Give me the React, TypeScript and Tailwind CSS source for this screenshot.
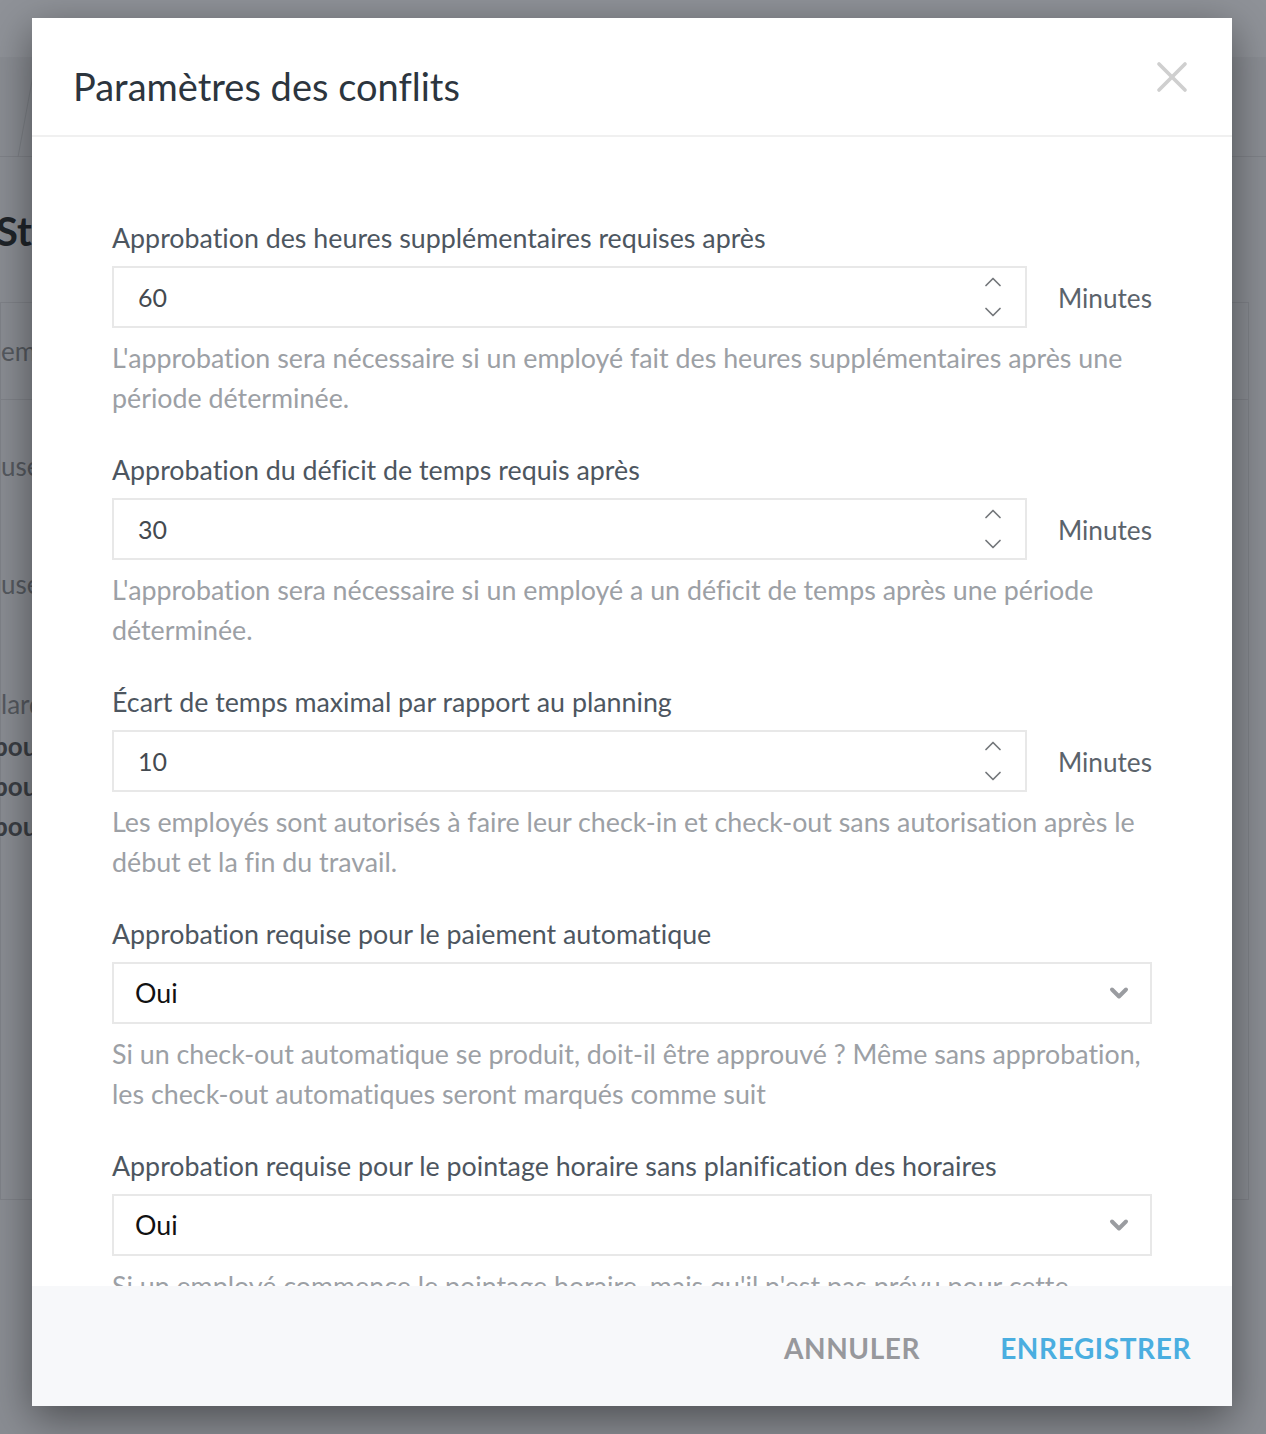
import { ChevronDown, ChevronUp, X } from "lucide-react";

const font = { fontFamily: "Lato, 'Noto Sans', sans-serif", fontVariantLigatures: "none" as const };

const NumberField = ({ label, value, help }: { label: string; value: string; help: string }) => (
  <div className="mb-[32px]">
    <div className="text-[26.8px] leading-[40px] text-[#4d5660]">{label}</div>
    <div className="mt-2 flex items-center">
      <div className="flex h-[62px] w-[915px] shrink-0 items-center justify-between border-2 border-[#e8e8e8] pl-[24px] pr-[18px]">
        <span className="pt-[2px] text-[25px] text-[#444a50]">{value}</span>
        <div className="flex flex-col items-center text-[#74777b]">
          <ChevronUp size={28} strokeWidth={1.5} />
          <ChevronDown size={28} strokeWidth={1.5} className="mt-[2px]" />
        </div>
      </div>
      <span className="ml-auto pt-[4px] text-[26.2px] text-[#5b636b]">Minutes</span>
    </div>
    <p className="mt-[10px] text-[26.8px] leading-[40px] text-[#9ca0a5]">{help}</p>
  </div>
);

const SelectField = ({ label, help }: { label: string; help: string }) => (
  <div className="mb-[32px]">
    <div className="text-[26.8px] leading-[40px] text-[#4d5660]">{label}</div>
    <div className="mt-2 flex h-[62px] w-full items-center justify-between border-2 border-[#e8e8e8] pl-[21px] pr-[17px]">
      <span className="text-[26.8px] text-[#111]">Oui</span>
      <ChevronDown size={28} strokeWidth={3.4} className="text-[#9a9ca0]" />
    </div>
    <p className="mt-[10px] text-[26.8px] leading-[40px] text-[#9ca0a5]">{help}</p>
  </div>
);

export default function App() {
  return (
    <div className="relative h-[1434px] w-full overflow-hidden bg-[#8a8d93]" style={font}>
      {/* page behind the overlay */}
      <div className="h-[57px] bg-[#8f9298]" />
      <div className="relative h-[100px] border-b border-[#7f8288]">
        <svg className="absolute left-[14px] top-[2px]" width="24" height="98" viewBox="0 0 24 98">
          <line x1="22" y1="0" x2="4" y2="98" stroke="#7d8086" strokeWidth="1" />
        </svg>
      </div>
      <div className="-ml-[4px] pt-[48px] text-[40px] font-bold leading-[52px] text-[#1f2429]">Statistiques</div>
      <div className="mr-[17px] mt-[45px] h-[898px] border border-[#7f8288]">
        <div className="flex h-[97px] items-center border-b border-[#7f8288] text-[26px] text-[#55595f]">employés</div>
        <div className="pt-[48px] text-[26px] leading-[36px] text-[#55595f]">usé</div>
        <div className="pt-[82px] text-[26px] leading-[36px] text-[#55595f]">usé</div>
        <div className="pt-[84px] text-[26px] leading-[36px] text-[#55595f]">lard</div>
        <div className="-ml-[8px] pt-[4px] text-[26px] font-bold leading-[40px] text-[#3a3e44]">pou</div>
        <div className="-ml-[8px] text-[26px] font-bold leading-[40px] text-[#3a3e44]">pou</div>
        <div className="-ml-[8px] text-[26px] font-bold leading-[40px] text-[#3a3e44]">pou</div>
      </div>

      {/* modal */}
      <div className="absolute left-[32px] top-[18px] flex h-[1388px] w-[1200px] flex-col bg-white shadow-[0_12px_40px_rgba(0,0,0,0.45)]">
        <div className="flex h-[119px] shrink-0 items-start justify-between border-b-2 border-[#f0f0f0] pl-[41px] pr-[34px] pt-[43px]">
          <h1 className="text-[38px] leading-[50px] text-[#2c353e]">Paramètres des conflits</h1>
          <X size={52} strokeWidth={1.7} className="-mt-[10px] text-[#cfcfcf]" />
        </div>
        <div className="h-[1149px] overflow-hidden px-[80px] pt-[81px]">
          <NumberField
            label="Approbation des heures supplémentaires requises après"
            value="60"
            help="L'approbation sera nécessaire si un employé fait des heures supplémentaires après une période déterminée."
          />
          <NumberField
            label="Approbation du déficit de temps requis après"
            value="30"
            help="L'approbation sera nécessaire si un employé a un déficit de temps après une période déterminée."
          />
          <NumberField
            label="Écart de temps maximal par rapport au planning"
            value="10"
            help="Les employés sont autorisés à faire leur check-in et check-out sans autorisation après le début et la fin du travail."
          />
          <SelectField
            label="Approbation requise pour le paiement automatique"
            help="Si un check-out automatique se produit, doit-il être approuvé ? Même sans approbation, les check-out automatiques seront marqués comme suit"
          />
          <SelectField
            label="Approbation requise pour le pointage horaire sans planification des horaires"
            help="Si un employé commence le pointage horaire, mais qu'il n'est pas prévu pour cette période, doit-il être approuvé ?"
          />
        </div>
        <div className="flex h-[120px] shrink-0 items-center justify-end gap-[80px] bg-[#f7f8fa] pr-[41px] pt-[4px]">
          <button className="text-[28px] font-bold tracking-[0.6px] text-[#97989c]">ANNULER</button>
          <button className="text-[28px] font-bold tracking-[0.6px] text-[#4aaee0]">ENREGISTRER</button>
        </div>
      </div>
    </div>
  );
}
